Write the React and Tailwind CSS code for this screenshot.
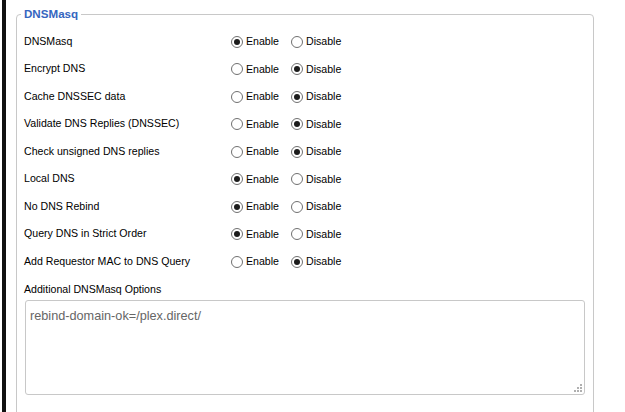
import React from "react";

const rows = [
  { label: "DNSMasq", on: true },
  { label: "Encrypt DNS", on: false },
  { label: "Cache DNSSEC data", on: false },
  { label: "Validate DNS Replies (DNSSEC)", on: false },
  { label: "Check unsigned DNS replies", on: false },
  { label: "Local DNS", on: true },
  { label: "No DNS Rebind", on: true },
  { label: "Query DNS in Strict Order", on: true },
  { label: "Add Requestor MAC to DNS Query", on: false },
];

function Radio({ checked, text }) {
  return (
    <label className="flex items-center gap-[3px]">
      <span className="w-[12px] h-[12px] rounded-full border border-[#707070] bg-white flex items-center justify-center shrink-0">
        {checked && <span className="w-[6px] h-[6px] rounded-full bg-[#1c1c1c]" />}
      </span>
      <span className="pt-[1px]">{text}</span>
    </label>
  );
}

export default function App() {
  return (
    <div
      className="w-[625px] h-[412px] bg-white flex overflow-hidden text-[10.6px] text-black"
      style={{ fontFamily: '"Liberation Sans", Arial, sans-serif' }}
    >
      {/* left frame edge */}
      <div className="ml-[2px] w-[4px] bg-[#111] shrink-0" />

      <fieldset className="ml-[10px] mt-[6px] w-[578px] h-[430px] border border-[#c8c8c8] rounded-[4px] pl-[7px] pr-[7px] pt-[6px] shrink-0">
        <legend className="-ml-[3px] px-[3px] leading-[16px] text-[11.6px] font-bold text-[#3566c0]">DNSMasq</legend>

        {rows.map((r) => (
          <div key={r.label} className="h-[27.5px] flex items-center">
            <div className="w-[207px] shrink-0">{r.label}</div>
            <div className="w-[60px] shrink-0">
              <Radio checked={r.on} text="Enable" />
            </div>
            <Radio checked={!r.on} text="Disable" />
          </div>
        ))}

        <div className="mt-[6px] leading-[14px]">Additional DNSMasq Options</div>

        <div className="relative mt-[4px] ml-[1px] w-[560px] h-[95px]">
          <textarea
            readOnly
            defaultValue="rebind-domain-ok=/plex.direct/"
            className="w-full h-full resize-none border border-[#c8c8c8] rounded-[3px] px-[4px] pt-[8px] text-[12.7px] leading-[15px] text-[#666] outline-none"
            style={{ fontFamily: '"Liberation Sans", Arial, sans-serif' }}
          />
          {/* resize grip */}
          <div className="absolute right-[3px] bottom-[3px] grid grid-cols-3 gap-[1px]">
            <span className="w-[2px] h-[2px]" />
            <span className="w-[2px] h-[2px]" />
            <span className="w-[2px] h-[2px] bg-[#b0b0b0]" />
            <span className="w-[2px] h-[2px]" />
            <span className="w-[2px] h-[2px] bg-[#b0b0b0]" />
            <span className="w-[2px] h-[2px] bg-[#b0b0b0]" />
            <span className="w-[2px] h-[2px] bg-[#b0b0b0]" />
            <span className="w-[2px] h-[2px] bg-[#b0b0b0]" />
            <span className="w-[2px] h-[2px] bg-[#b0b0b0]" />
          </div>
        </div>
      </fieldset>
    </div>
  );
}
